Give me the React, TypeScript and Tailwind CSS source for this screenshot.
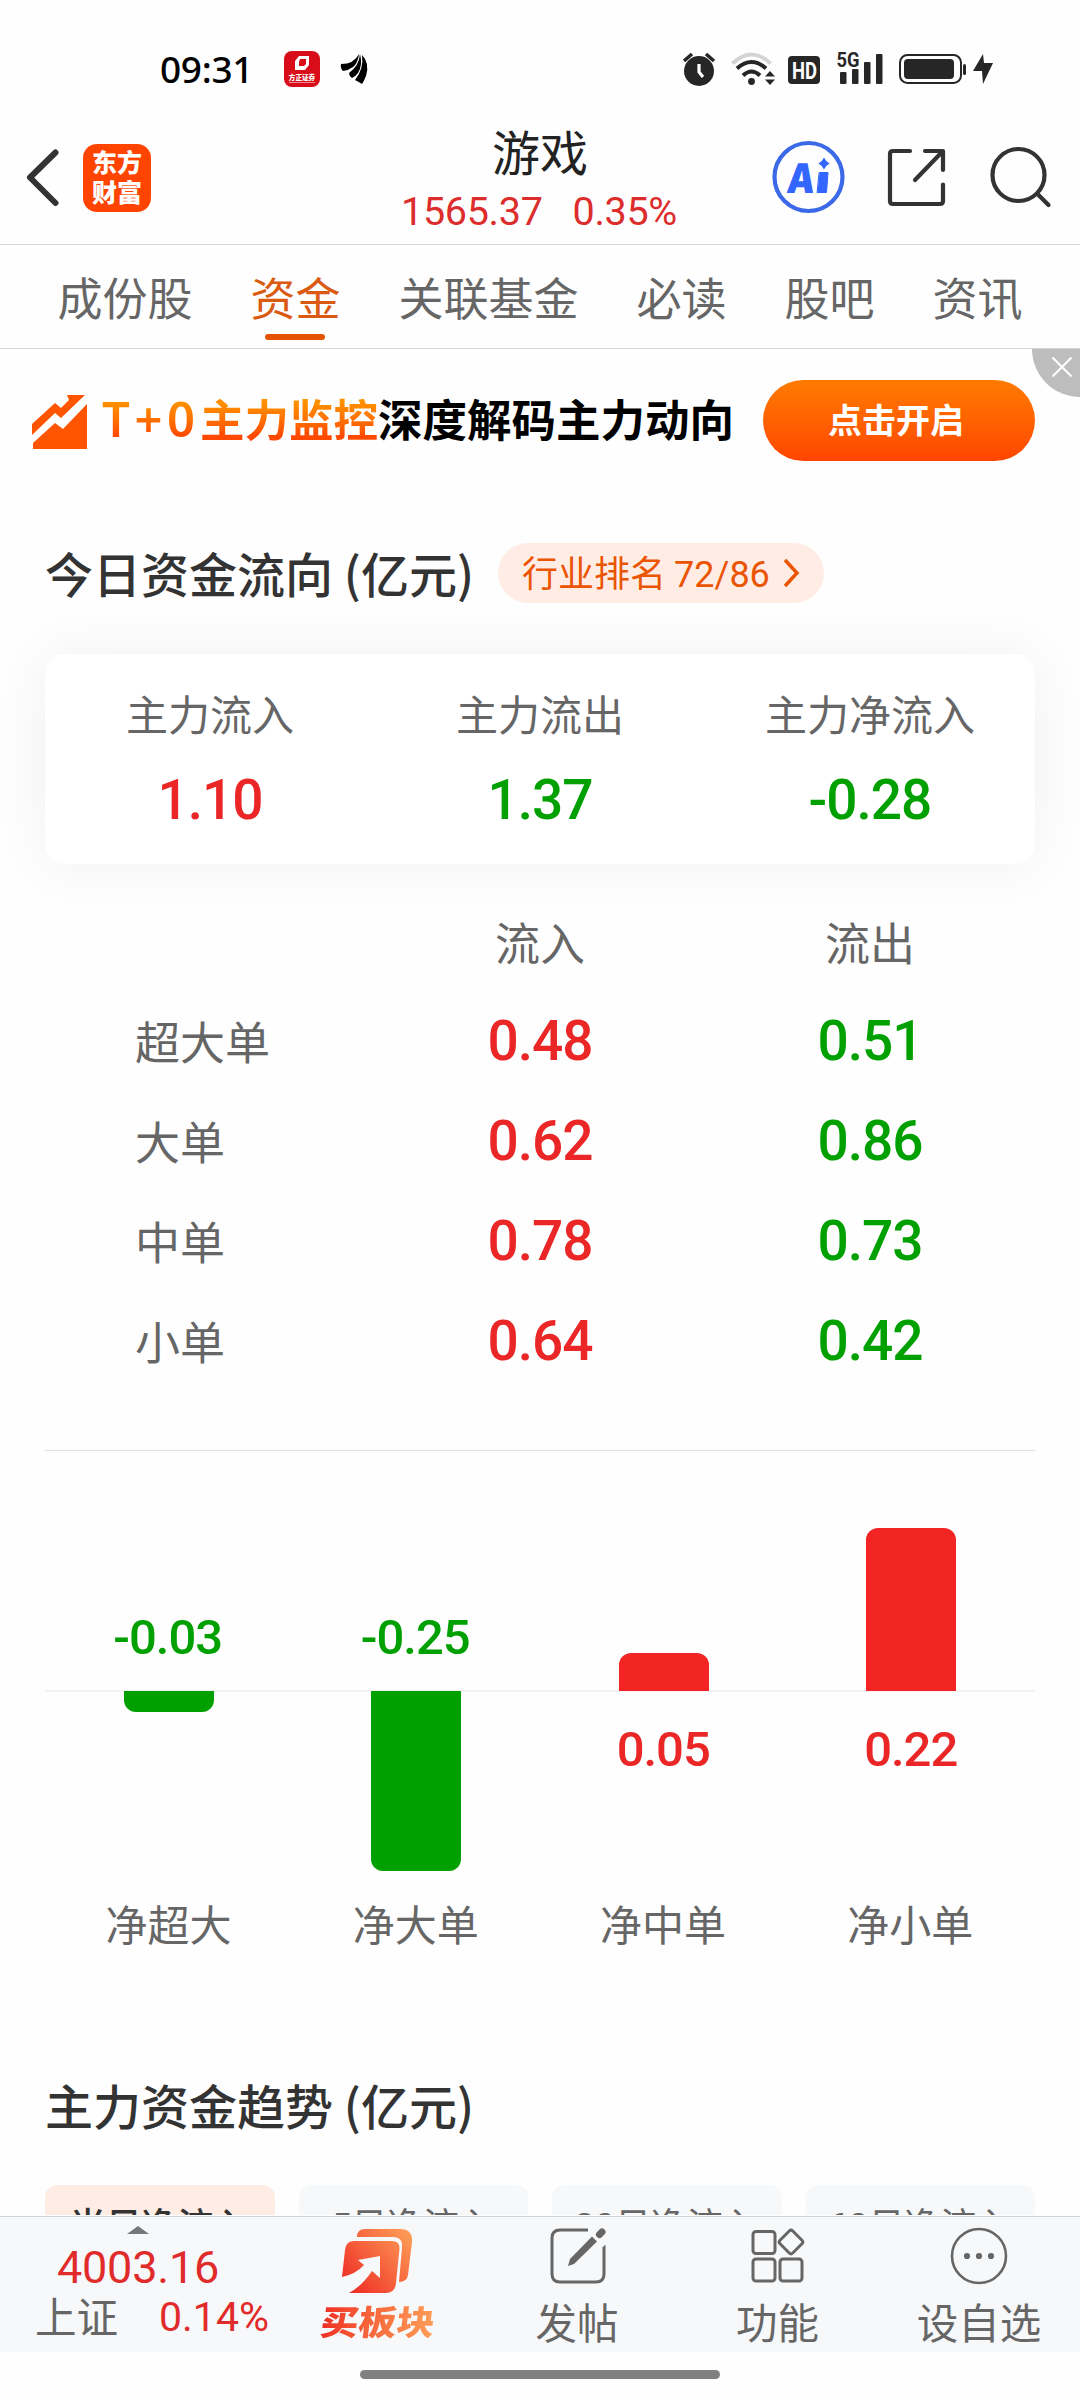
import type { ReactNode } from "react";

const tabs = ["成份股", "资金", "关联基金", "必读", "股吧", "资讯"];

const summary = [
  { label: "主力流入", value: "1.10", up: true },
  { label: "主力流出", value: "1.37", up: false },
  { label: "主力净流入", value: "-0.28", up: false },
];

const orders = [
  { label: "超大单", inflow: "0.48", outflow: "0.51" },
  { label: "大单", inflow: "0.62", outflow: "0.86" },
  { label: "中单", inflow: "0.78", outflow: "0.73" },
  { label: "小单", inflow: "0.64", outflow: "0.42" },
];

// height = bar length in px from the zero line
const bars = [
  { label: "净超大", value: "-0.03", height: 21, up: false },
  { label: "净大单", value: "-0.25", height: 180, up: false },
  { label: "净中单", value: "0.05", height: 38, up: true },
  { label: "净小单", value: "0.22", height: 163, up: true },
];

const ranges = ["当日净流入", "5日净流入", "20日净流入", "60日净流入"];

function StatusBar() {
  return (
    <div className="flex h-[106px] items-start pt-[44px]">
      <span className="ml-[160px] w-[124px] font-['Noto_Sans'] text-[37px] leading-[50px] font-medium tracking-[-0.3px] text-black">09:31</span>
      <svg width="100" height="50" viewBox="0 0 100 50">
        <rect x="0" y="7" width="36" height="36" rx="8" fill="#d90d19" />
        <path d="M15 12h10v9l-4 5H11v-9z M16 15l-1 3v4h5l2-2v-5z" fill="#fff" fillRule="evenodd" />
        <text x="18" y="35.500" textAnchor="middle" fontSize="6.600" fontWeight="900" fill="#fff" className="font-['Noto_Sans_CJK_SC']">方正证券</text>
        <path d="M5 38.500h26" stroke="#f08a8f" strokeWidth="1" />
        <g fill="#000">
          <path d="M57 20q13 0 18-10q-1 9-6 13q-4 3-10 4q-3-3-2-7z" />
          <path d="M65 29q10-7 11-19q3 11-2 19q-3 4-6 5q-3-2-3-5z" />
          <path d="M71 36q9-11 7-25q8 8 4 21q-2 5-4 8q-3-2-7-4z" />
        </g>
      </svg>
      <svg className="ml-[299px]" width="312" height="50" viewBox="683 44 312 50" fill="#262626">
        <circle cx="699" cy="71" r="15" />
        <path d="M684 61l8-7M706 54l8 7" stroke="#262626" strokeWidth="3.500" />
        <path d="M699 64v8l4 5" stroke="#fff" strokeWidth="3.200" fill="none" />
        <path d="M732.500 63.500q19-18 38 0" stroke="#d4d4d4" strokeWidth="4" fill="none" />
        <path d="M737 68.500q14.500-13 29 0" stroke="#262626" strokeWidth="4" fill="none" />
        <path d="M743 75.500q8.500-8 17 0" stroke="#262626" strokeWidth="4" fill="none" />
        <circle cx="751.500" cy="81.500" r="3.400" />
        <path d="M770 71l5 5.500h-10zM770 85l-5-5.500h10z" />
        <rect x="788" y="56" width="32" height="28" rx="4" />
        <text x="804.500" y="78.500" textAnchor="middle" fontSize="24" fontWeight="700" fill="#fff" textLength="25" lengthAdjust="spacingAndGlyphs" className="font-['Roboto']">HD</text>
        <text x="836.500" y="67" fontSize="21" fontWeight="700" textLength="23" lengthAdjust="spacingAndGlyphs" className="font-['Roboto']">5G</text>
        <rect x="840" y="72" width="6.500" height="12" rx="1" />
        <rect x="852" y="69" width="6.500" height="15" rx="1" />
        <rect x="864" y="62" width="6.500" height="22" rx="1" />
        <rect x="876" y="54" width="6.500" height="30" rx="1" />
        <rect x="900" y="55" width="61" height="28" rx="7.500" fill="none" stroke="#262626" strokeWidth="2" />
        <rect x="904" y="59" width="50" height="20" rx="4" />
        <rect x="963" y="64" width="3" height="11" rx="1.500" />
        <path d="M983 54l-10 17h9l1 13 10-21h-9z" />
      </svg>
    </div>
  );
}

function Header() {
  return (
    <header className="flex h-[139px] items-start border-b border-[#d5d5d5]">
      <div className="flex w-[400px] pt-[37px]">
        <svg className="mt-1" width="83" height="60" viewBox="0 0 83 60" fill="none" stroke="#333" strokeWidth="6" strokeLinecap="round" strokeLinejoin="round">
          <path d="M55.500 5.500L30 30.500l25.500 25.500" />
        </svg>
        <div className="mt-px flex h-[68px] w-[68px] items-center rounded-[14px] bg-[#ff4400] pb-[4px] pl-[9px] text-[25px] leading-[30px] font-black text-white">
          东方
          <br />
          财富
        </div>
      </div>
      <div className="flex w-[280px] flex-col items-center pt-[19px]">
        <h1 className="text-[48px] leading-[50px] text-[#222]">游戏</h1>
        <div className="mt-[14px] flex gap-[30px] pr-[2px] font-['Roboto'] text-[39.500px] leading-[46px] tracking-[-0.300px] text-[#dd2c2c]">
          <span>1565.37</span>
          <span>0.35%</span>
        </div>
      </div>
      <svg className="mt-[26px]" width="400" height="90" viewBox="680 132 400 90" fill="none" stroke="#333" strokeWidth="4.200" strokeLinecap="round" strokeLinejoin="round">
        <circle cx="808.500" cy="177" r="34" stroke="#3c69e8" />
        <g fill="#3366ff" stroke="none">
          <path d="M824 157.500q1.800 4 5.500 6q-3.700 2-5.500 6q-1.800-4-5.500-6q3.700-2 5.500-6z" />
          <text x="824" y="193.500" fontSize="41" fontWeight="900" textLength="28" lengthAdjust="spacingAndGlyphs" transform="skewX(-6)" className="font-['Inter']" dx="-18">A</text>
          <path d="M819.500 172.500h8.500l-1.500 20h-9z" stroke="#3366ff" strokeWidth="1" />
        </g>
        <path d="M910 151h-17q-3 0-3 3v47q0 3 3 3h47q3 0 3-3v-16.500M925 151h18v19M942 152l-27 28" />
        <circle cx="1018.500" cy="175" r="26" />
        <path d="M1037.500 194l11 11" />
      </svg>
    </header>
  );
}

function Tabs() {
  return (
    <nav className="flex h-[104px] items-start justify-center gap-[58px] border-b border-[#d5d5d5] pt-[20px]">
      {tabs.map((tab) => (
        <div key={tab} className="flex flex-col items-center">
          <span className={tab === "资金" ? "text-[45px] leading-[64px] text-[#d95a10]" : "text-[45px] leading-[64px] text-[#666]"}>{tab}</span>
          {tab === "资金" && <span className="mt-[5px] h-[6px] w-[60px] rounded-full bg-[#e65300]" />}
        </div>
      ))}
    </nav>
  );
}

function Banner() {
  return (
    <div className="relative flex h-[146px] items-center pb-[3px] pl-[31px]">
      <svg className="mt-[2px]" width="70" height="60" viewBox="31 391 70 60" fill="#ff5500">
        <path d="M32 423l23-21 6 5 8-8-2-5h18L61 417l-6-5-23 22z" />
        <path d="M33 442l22-20 8 6 24-25v45H33z" />
      </svg>
      <p className="-mt-[5px] flex w-[662px] pl-px text-[44.500px] leading-[60px] font-bold whitespace-nowrap">
        <span className="flex bg-linear-to-b from-[#ff9000] from-25% to-[#ff4800] to-80% bg-clip-text text-transparent">
          <span className="w-[98px] font-['Noto_Sans'] text-[49px] font-semibold tracking-[4.500px]">T+0</span>
          <span>主力监控</span>
        </span>
        <span className="text-black">深度解码主力动向</span>
      </p>
      <button className="h-[81px] w-[272px] rounded-full bg-linear-to-b from-[#ff7a00] to-[#ff4400] pr-[6px] pb-1 text-[34px] font-bold text-white">点击开启</button>
      <div className="absolute top-0 right-0 flex h-[48px] w-[48px] justify-end rounded-bl-full bg-[#bdbdbd]">
        <svg width="48" height="48" viewBox="0 0 48 48" stroke="#fff" strokeWidth="2">
          <path d="M20.500 8.500l19 19M39.500 8.500l-19 19" />
        </svg>
      </div>
    </div>
  );
}

function SectionTitle({ children }: { children: ReactNode }) {
  return <h2 className="text-[48px] leading-[60px] font-medium whitespace-pre text-[#333]">{children}</h2>;
}

function FundFlow() {
  return (
    <section className="px-[45px] pt-[46px]">
      <div className="flex h-[62px] items-center">
        <SectionTitle>今日资金流向 (亿元)</SectionTitle>
        <div className="mt-[2px] ml-[24px] flex h-[60px] w-[326px] items-center rounded-full bg-[#ffede5] pl-[24px] text-[36px] text-[#ea5504]">
          <span className="whitespace-pre">行业排名 <span className="font-['Roboto']">72/86</span></span>
          <svg className="ml-[11px]" width="20" height="32" viewBox="0 0 20 32" fill="none" stroke="#ea5504" strokeWidth="3.500">
            <path d="M4 3l12 13L4 29" />
          </svg>
        </div>
      </div>

      <div className="mt-[51px] grid h-[210px] grid-cols-3 rounded-[20px] bg-white pt-[29px] text-center shadow-[0_0_60px_rgba(0,0,0,0.06)]">
        {summary.map((item) => (
          <div key={item.label}>
            <div className="text-[42px] leading-[60px] text-[#666]">{item.label}</div>
            <div className={`mt-[25px] font-['Roboto'] text-[55px] leading-[64px] font-medium tracking-[-1px] ${item.up ? "text-[#ea2626]" : "text-[#00a000]"}`}>{item.value}</div>
          </div>
        ))}
      </div>

      <div className="mt-[48px] grid h-[79px] grid-cols-3 text-center text-[45px] leading-[60px] text-[#666]">
        <span />
        <span>流入</span>
        <span>流出</span>
      </div>
      {orders.map((row) => (
        <div key={row.label} className="grid h-[100px] grid-cols-3 items-center text-center">
          <span className="pl-[90px] text-left text-[45px] leading-[60px] text-[#666]">{row.label}</span>
          <span className="font-['Roboto'] text-[55px] leading-[64px] font-medium tracking-[-1px] text-[#ea2626]">{row.inflow}</span>
          <span className="font-['Roboto'] text-[55px] leading-[64px] font-medium tracking-[-1px] text-[#00a000]">{row.outflow}</span>
        </div>
      ))}
      <div className="mt-[59px] h-px bg-[#e0e0e0]" />
    </section>
  );
}

function NetChart() {
  return (
    <section className="px-[45px]">
      <div className="grid h-[241px] grid-cols-4 border-b-2 border-[#f2f2f2]">
        {bars.map((bar) => (
          <div key={bar.label} className="flex flex-col items-center justify-end">
            {bar.up ? (
              <div className="-mb-px w-[90px] rounded-t-[12px] bg-[#f32424]" style={{ height: bar.height }} />
            ) : (
              <span className="mb-[22px] pr-[2px] font-['Roboto'] text-[49px] leading-[60px] font-medium tracking-[-1px] text-[#00a000]">{bar.value}</span>
            )}
          </div>
        ))}
      </div>
      <div className="-mt-px grid h-[200px] grid-cols-4">
        {bars.map((bar) => (
          <div key={bar.label} className="flex flex-col items-center">
            {bar.up ? (
              <span className="mt-[29px] pr-px font-['Roboto'] text-[49px] leading-[60px] font-medium tracking-[-1px] text-[#ea2626]">{bar.value}</span>
            ) : (
              <div className="w-[90px] rounded-b-[12px] bg-[#00a000]" style={{ height: bar.height }} />
            )}
          </div>
        ))}
      </div>
      <div className="grid grid-cols-4 pr-px text-center text-[42px] leading-[64px] text-[#666]">
        {bars.map((bar) => (
          <span key={bar.label}>{bar.label}</span>
        ))}
      </div>
    </section>
  );
}

function Trend() {
  return (
    <section className="h-[260px] overflow-hidden px-[45px] pt-[119px]">
      <SectionTitle>主力资金趋势 (亿元)</SectionTitle>
      <div className="mt-[51px] grid grid-cols-4 gap-[24px] text-center font-['Roboto','Noto_Sans_CJK_SC',sans-serif] text-[36px] leading-[84px]">
        {ranges.map((range, i) => (
          <span key={range} className={i === 0 ? "rounded-[12px] bg-[#ffede5] font-medium text-[#333]" : "rounded-[12px] bg-[#f7f8fa] text-[#666]"}>{range}</span>
        ))}
      </div>
    </section>
  );
}

function BottomBar() {
  return (
    <footer className="mt-auto flex h-[136px] border-t border-[#d0d3d5] bg-[#f6f8fa] text-[41.500px] leading-[50px] text-[#666]">
      <div className="flex w-[276px] flex-col items-center pt-[9px]">
        <svg width="22" height="8" viewBox="0 0 22 8" fill="#77787b">
          <path d="M11 0l11 8H0z" />
        </svg>
        <span className="mt-[9px] font-['Roboto'] text-[45px] leading-[50px] tracking-[-0.200px] text-[#e12b2b]">4003.16</span>
        <div className="mt-[-3px] flex w-full pl-[35px]">
          <span className="w-[124px]">上证</span>
          <span className="mt-[2px] font-['Roboto'] text-[41px] text-[#e12b2b]">0.14%</span>
        </div>
      </div>
      <div className="flex w-[201px] flex-col items-center pt-[9px]">
        <svg width="76" height="70" viewBox="339 2226 76 70">
          <defs>
            <linearGradient id="buy" gradientUnits="userSpaceOnUse" x1="345" y1="2290" x2="410" y2="2232">
              <stop offset="0" stopColor="#ee2a24" />
              <stop offset="1" stopColor="#fe9d57" />
            </linearGradient>
          </defs>
          <path d="M357 2237q0-8 8-8h35q13 0 12 13l-4 33q-1 7-9 7l3-34q1-11-9-11z" fill="url(#buy)" />
          <path d="M354 2241h38q8 0 7.500 8l-3.500 34q-1 10-10 10h-37q13-7 23-22l8 7v-22l-22 4 6 5q-8 9-22 12l3-27q1-9 9-9z" fill="url(#buy)" />
        </svg>
        <span className="mt-[2px] ml-[3px] -skew-x-6 scale-y-90 bg-linear-to-r from-[#ee2a24] to-[#fe9d57] bg-clip-text text-[38px] leading-[46px] font-black text-transparent">买板块</span>
      </div>
      <div className="flex w-[200px] flex-col items-center pt-[9px]">
        <svg width="60" height="60" viewBox="0 0 60 60" fill="none" stroke="#666" strokeWidth="3">
          <path d="M41 4H13q-8 0-8 8v36q0 8 8 8h36q8 0 8-8V22l-1 1" />
          <path d="M21 40l2-7L45 10.500l5 5L27 38z" fill="#666" stroke="none" />
          <path d="M52.500 8.500l2.500-2.500" strokeWidth="7" strokeLinecap="round" />
        </svg>
        <span className="mt-[10px]">发帖</span>
      </div>
      <div className="flex w-[201px] flex-col items-center pt-[9px]">
        <svg width="60" height="60" viewBox="0 0 60 60" fill="none" stroke="#666" strokeWidth="3">
          <rect x="5" y="5.500" width="22" height="22" rx="3" />
          <rect x="5" y="33" width="22" height="22" rx="3" />
          <rect x="32" y="33" width="22" height="22" rx="3" />
          <rect x="34" y="7" width="18" height="18" rx="2.500" transform="rotate(45 43 16)" />
        </svg>
        <span className="mt-[10px]">功能</span>
      </div>
      <div className="flex w-[202px] flex-col items-center pt-[9px]">
        <svg width="60" height="60" viewBox="0 0 60 60" fill="none" stroke="#666" strokeWidth="2.600">
          <circle cx="30" cy="30" r="27" />
          <g fill="#666" stroke="none">
            <circle cx="18" cy="30" r="3.100" />
            <circle cx="30" cy="30" r="3.100" />
            <circle cx="42" cy="30" r="3.100" />
          </g>
        </svg>
        <span className="mt-[10px]">设自选</span>
      </div>
    </footer>
  );
}

export default function App() {
  return (
    <div className="flex h-[2400px] w-[1080px] flex-col overflow-hidden bg-[#fefefe] font-['Noto_Sans_CJK_SC',sans-serif]">
      <div className="flex min-h-0 flex-1 flex-col overflow-hidden *:shrink-0">
        <StatusBar />
        <Header />
        <Tabs />
        <Banner />
        <FundFlow />
        <NetChart />
        <Trend />
      </div>
      <BottomBar />
      <div className="mx-auto mt-[18px] mb-[21px] h-[9px] w-[360px] rounded-full bg-[#808080]" />
    </div>
  );
}
